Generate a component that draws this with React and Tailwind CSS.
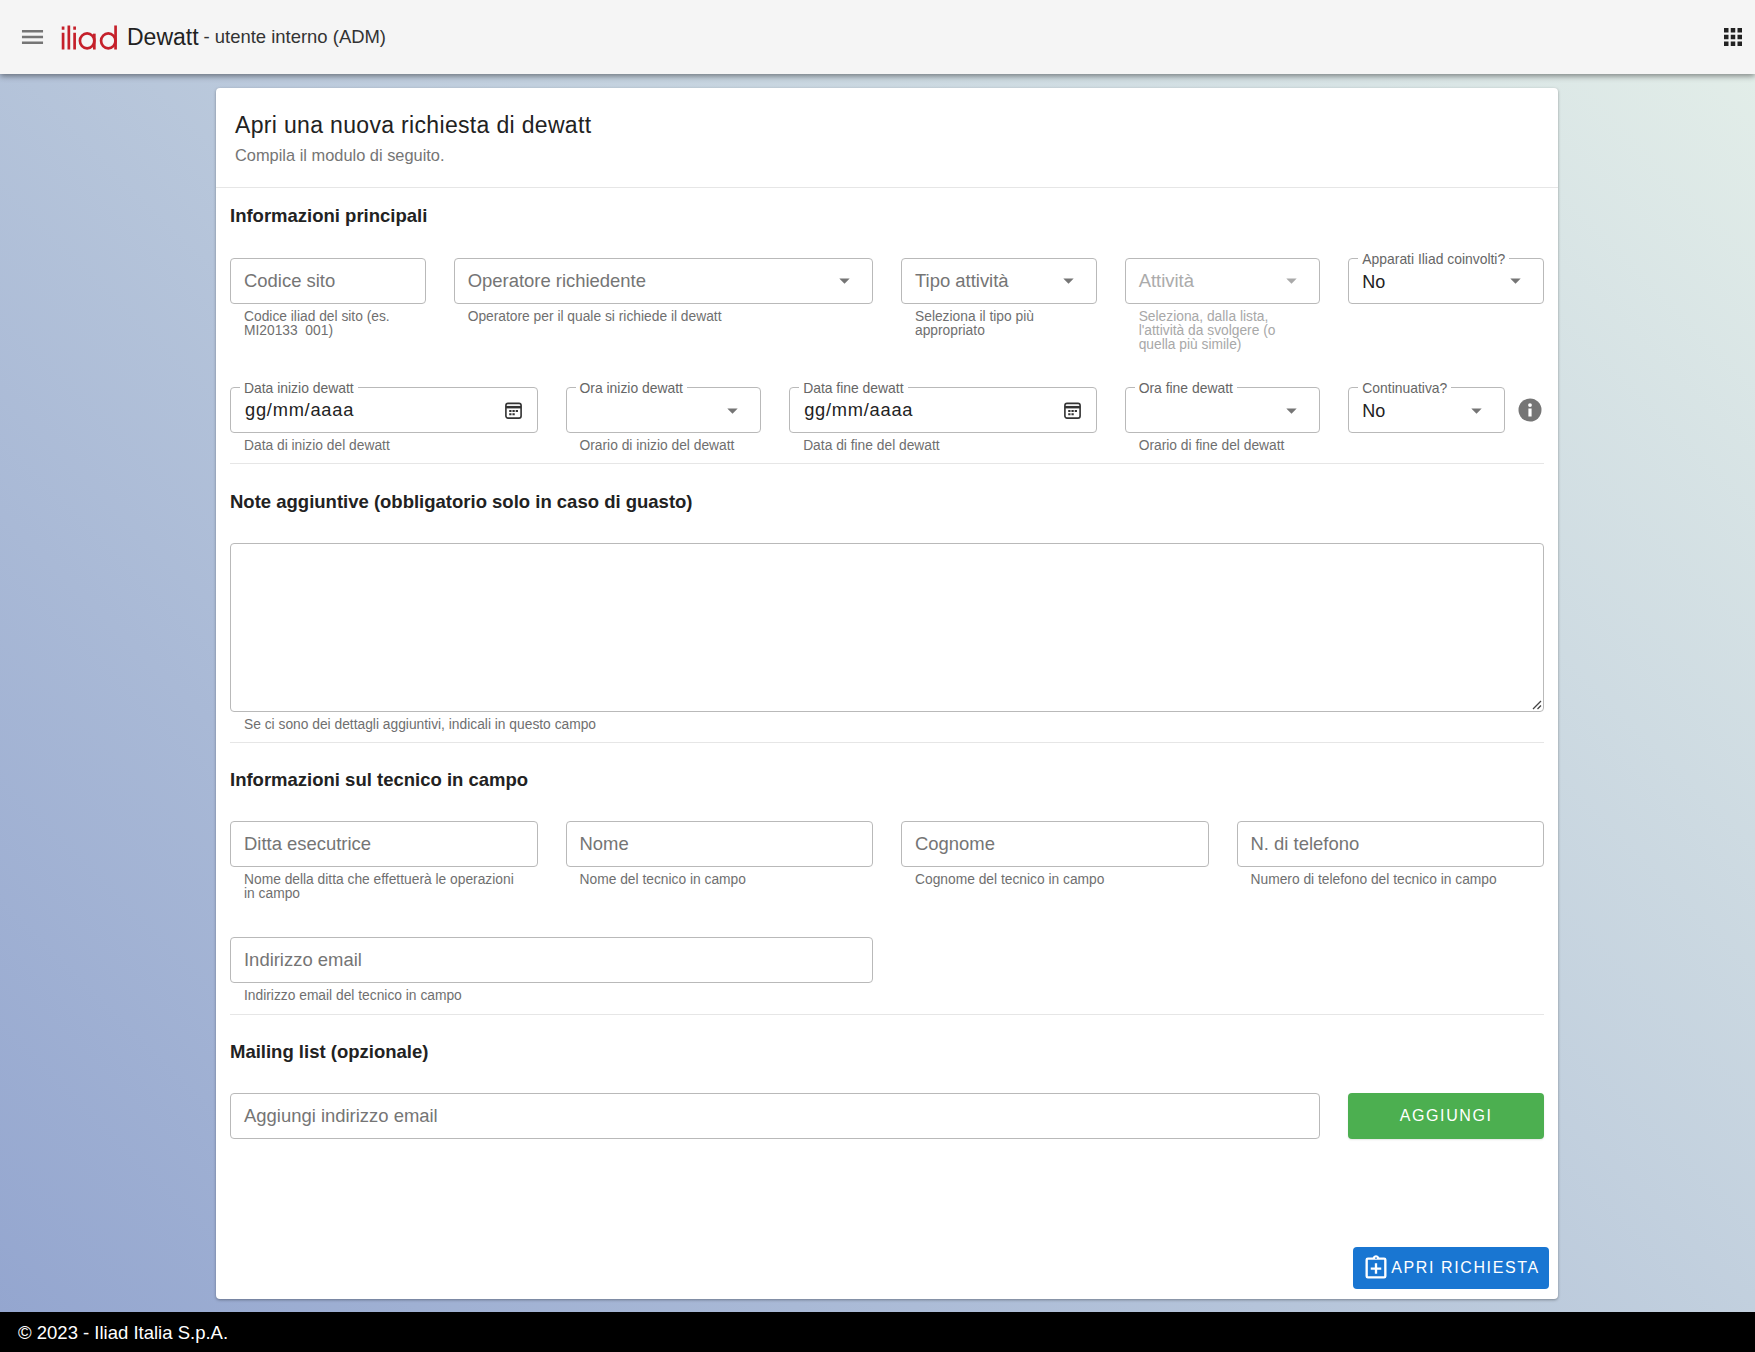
const FONT = "font-['Liberation_Sans',Arial,sans-serif]";

function Arrow({ disabled }) {
  return (
    <svg viewBox="0 0 24 24" className="w-[25px] h-[25px] shrink-0 mr-[3px]" fill={disabled ? "#a9a9a9" : "#757575"}>
      <path d="M7 10l5 5 5-5z" />
    </svg>
  );
}

function Calendar() {
  return (
    <svg viewBox="0 0 20 20" className="w-[19px] h-[19px] shrink-0 mr-[2px]" fill="none" stroke="#333" strokeWidth="1.7">
      <rect x="2" y="2.5" width="16" height="15.5" rx="2.2" />
      <path d="M2 6.5h16" strokeWidth="2.6" />
      <path d="M5.5 10.5h2.4M8.9 10.5h2.4M12.3 10.5h2.4M5.5 14h2.4M8.9 14h2.4" strokeWidth="2" />
    </svg>
  );
}

function Helper({ text, disabled }) {
  return (
    <p className={`mt-[6px] px-[14px] text-[13.8px] leading-[14px] ${disabled ? "text-[#a8a8a8]" : "text-[#6f6f6f]"}`}>
      {text}
    </p>
  );
}

// campo con bordo, label opzionale sul bordo
function Field({ label, placeholder, value, helper, select, date, disabled, span = "col-span-2" }) {
  return (
    <div className={span}>
      <div className="relative h-[46px] rounded-[4px] border border-[#b9b9b9] flex items-center justify-between pl-[13px] pr-[12px]">
        {label && (
          <span className="absolute left-[9px] -top-[8px] px-[4px] bg-white text-[13.9px] leading-[16px] text-[#666] whitespace-nowrap">
            {label}
          </span>
        )}
        {placeholder && (
          <span className={`text-[18.45px] ${disabled ? "text-[#ababab]" : "text-[#757575]"}`}>{placeholder}</span>
        )}
        {value && !date && <span className="text-[18px] text-[#222] pt-[3px]">{value}</span>}
        {value && date && <span className="text-[18.3px] tracking-[0.75px] text-[#222] pl-[1px] pb-[1px]">{value}</span>}
        {!placeholder && !value && <span />}
        {select && <Arrow disabled={disabled} />}
        {date && <Calendar />}
      </div>
      {helper && <Helper text={helper} disabled={disabled} />}
    </div>
  );
}

function SectionTitle({ children, className = "" }) {
  return <h2 className={`text-[18.5px] leading-[22px] font-bold text-[#222] ${className}`}>{children}</h2>;
}

export default function App() {
  return (
    <div className={`${FONT} w-full h-screen flex flex-col overflow-hidden bg-[linear-gradient(45deg,#93a5cf_0%,#e4efe9_100%)]`}>
      <header className="relative z-10 h-[74px] shrink-0 bg-[#f5f5f5] shadow-[0_2px_6px_rgba(0,0,0,0.45)] flex items-center pl-[21px] pr-[13px]">
        <svg viewBox="0 0 24 24" className="w-[23px] h-[24px] mr-[17px]" fill="none" stroke="#757575" strokeWidth="2.5">
          <path d="M1 6h22M1 12h22M1 18h22" />
        </svg>
        <svg viewBox="0 0 60 26" className="w-[58px] h-[25px] mr-[8px]" fill="none" stroke="#c5202a" strokeWidth="2.8">
          <path d="M2 8v17.5M2 1.5v3.5M8 0.5v25M14 8v17.5M14 1.5v3.5" />
          <ellipse cx="27" cy="16.5" rx="7.5" ry="7.8" />
          <path d="M34.5 9v16.5" />
          <ellipse cx="49" cy="16.5" rx="7.5" ry="7.8" />
          <path d="M56.6 0.5v25" />
        </svg>
        <span className="text-[23px] text-[#222]">Dewatt</span>
        <span className="text-[18.45px] text-[#333] ml-[5px]">- utente interno (ADM)</span>
        <svg viewBox="0 0 20 20" className="ml-auto w-[18px] h-[18px]" fill="#222">
          <path d="M0 0h5v5H0zM7.5 0h5v5h-5zM15 0h5v5h-5zM0 7.5h5v5H0zM7.5 7.5h5v5h-5zM15 7.5h5v5h-5zM0 15h5v5H0zM7.5 15h5v5h-5zM15 15h5v5h-5z" />
        </svg>
      </header>

      <main className="flex-1 min-h-0 pl-[216px] pt-[14px] pb-[13px]">
        <div className="relative w-[1342px] h-full bg-white rounded-[4px] shadow-[0_1px_3px_rgba(0,0,0,0.35)]">
          <div className="h-[100px] border-b border-[#e6e6e6] pl-[19px] pt-[22px]">
            <h1 className="text-[23px] leading-[30px] text-[#222] tracking-[0.33px]">Apri una nuova richiesta di dewatt</h1>
            <p className="text-[16.4px] leading-[20px] mt-[5px] text-[#757575]">Compila il modulo di seguito.</p>
          </div>

          <div className="px-[14px]">
            <SectionTitle className="mt-[17px]">Informazioni principali</SectionTitle>

            <div className="grid grid-cols-12 gap-x-[28px] mt-[30.5px]">
              <Field placeholder="Codice sito" helper={<>Codice iliad del sito (es. MI20133&nbsp;&nbsp;001)</>} />
              <Field span="col-span-4" placeholder="Operatore richiedente" helper="Operatore per il quale si richiede il dewatt" select />
              <Field placeholder="Tipo attività" helper="Seleziona il tipo più appropriato" select />
              <Field placeholder="Attività" helper="Seleziona, dalla lista, l'attività da svolgere (o quella più simile)" select disabled />
              <Field label="Apparati Iliad coinvolti?" value="No" select />
            </div>

            <div className="grid grid-cols-12 gap-x-[28px] mt-[35.5px] pb-[10px] border-b border-[#e6e6e6]">
              <Field span="col-span-3" label="Data inizio dewatt" value="gg/mm/aaaa" helper="Data di inizio del dewatt" date />
              <Field label="Ora inizio dewatt" helper="Orario di inizio del dewatt" select />
              <Field span="col-span-3" label="Data fine dewatt" value="gg/mm/aaaa" helper="Data di fine del dewatt" date />
              <Field label="Ora fine dewatt" helper="Orario di fine del dewatt" select />
              <div className="col-span-2 flex items-start gap-[13px]">
                <Field span="flex-1" label="Continuativa?" value="No" select />
                <svg viewBox="0 0 24 24" className="w-[24px] h-[24px] mt-[11px] mr-[2px] shrink-0" fill="#757575">
                  <circle cx="12" cy="12" r="11.5" />
                  <path fill="#fff" d="M10.4 10.5h3.2v8h-3.2zM12 5.2a1.9 1.9 0 1 1 0 3.8 1.9 1.9 0 0 1 0-3.8z" />
                </svg>
              </div>
            </div>

            <SectionTitle className="mt-[27px]">Note aggiuntive (obbligatorio solo in caso di guasto)</SectionTitle>

            <div className="mt-[30px] relative h-[169px] rounded-[4px] border border-[#b9b9b9]">
              <svg viewBox="0 0 10 10" className="absolute right-[1px] bottom-[1px] w-[10px] h-[10px]" fill="none" stroke="#444" strokeWidth="1.3">
                <path d="M1 9l8-8M5.5 9L9 5.5" />
              </svg>
            </div>
            <div className="pb-[10px] border-b border-[#e6e6e6]">
              <Helper text="Se ci sono dei dettagli aggiuntivi, indicali in questo campo" />
            </div>

            <SectionTitle className="mt-[26px]">Informazioni sul tecnico in campo</SectionTitle>

            <div className="grid grid-cols-12 gap-x-[28px] gap-y-[36px] mt-[30px] pb-[11px] border-b border-[#e6e6e6]">
              <Field span="col-span-3" placeholder="Ditta esecutrice" helper="Nome della ditta che effettuerà le operazioni in campo" />
              <Field span="col-span-3" placeholder="Nome" helper="Nome del tecnico in campo" />
              <Field span="col-span-3" placeholder="Cognome" helper="Cognome del tecnico in campo" />
              <Field span="col-span-3" placeholder="N. di telefono" helper="Numero di telefono del tecnico in campo" />
              <Field span="col-span-6" placeholder="Indirizzo email" helper="Indirizzo email del tecnico in campo" />
            </div>

            <SectionTitle className="mt-[26px]">Mailing list (opzionale)</SectionTitle>

            <div className="grid grid-cols-12 gap-x-[28px] mt-[30px]">
              <Field span="col-span-10" placeholder="Aggiungi indirizzo email" />
              <button className="col-span-2 h-[46px] rounded-[4px] bg-[#4caf50] text-white text-[16px] tracking-[1.6px] pb-[1px] shadow-[0_1px_2px_rgba(0,0,0,0.1)]">
                AGGIUNGI
              </button>
            </div>
          </div>

          <button className="absolute right-[9px] bottom-[10px] w-[196px] h-[42px] rounded-[4px] bg-[#1976d2] text-white text-[16px] tracking-[1.6px] flex items-center justify-center gap-[1px]">
            <svg viewBox="0 0 24 24" className="w-[28px] h-[28px] shrink-0" fill="#fff">
              <path d="M19 3h-4.18C14.4 1.84 13.3 1 12 1s-2.4.84-2.82 2H5a2 2 0 0 0-2 2v14a2 2 0 0 0 2 2h14a2 2 0 0 0 2-2V5a2 2 0 0 0-2-2zm-7-.25a.75.75 0 1 1 0 1.5.75.75 0 0 1 0-1.5zM19 19H5V5h14v14zm-8-2h2v-3.5h3.5v-2H13V8h-2v3.5H7.5v2H11V17z" />
            </svg>
            APRI RICHIESTA
          </button>
        </div>
      </main>

      <footer className="h-[40px] shrink-0 bg-black text-white text-[18.5px] flex items-center pl-[18px] pt-[1px]">
        © 2023 - Iliad Italia S.p.A.
      </footer>
    </div>
  );
}
